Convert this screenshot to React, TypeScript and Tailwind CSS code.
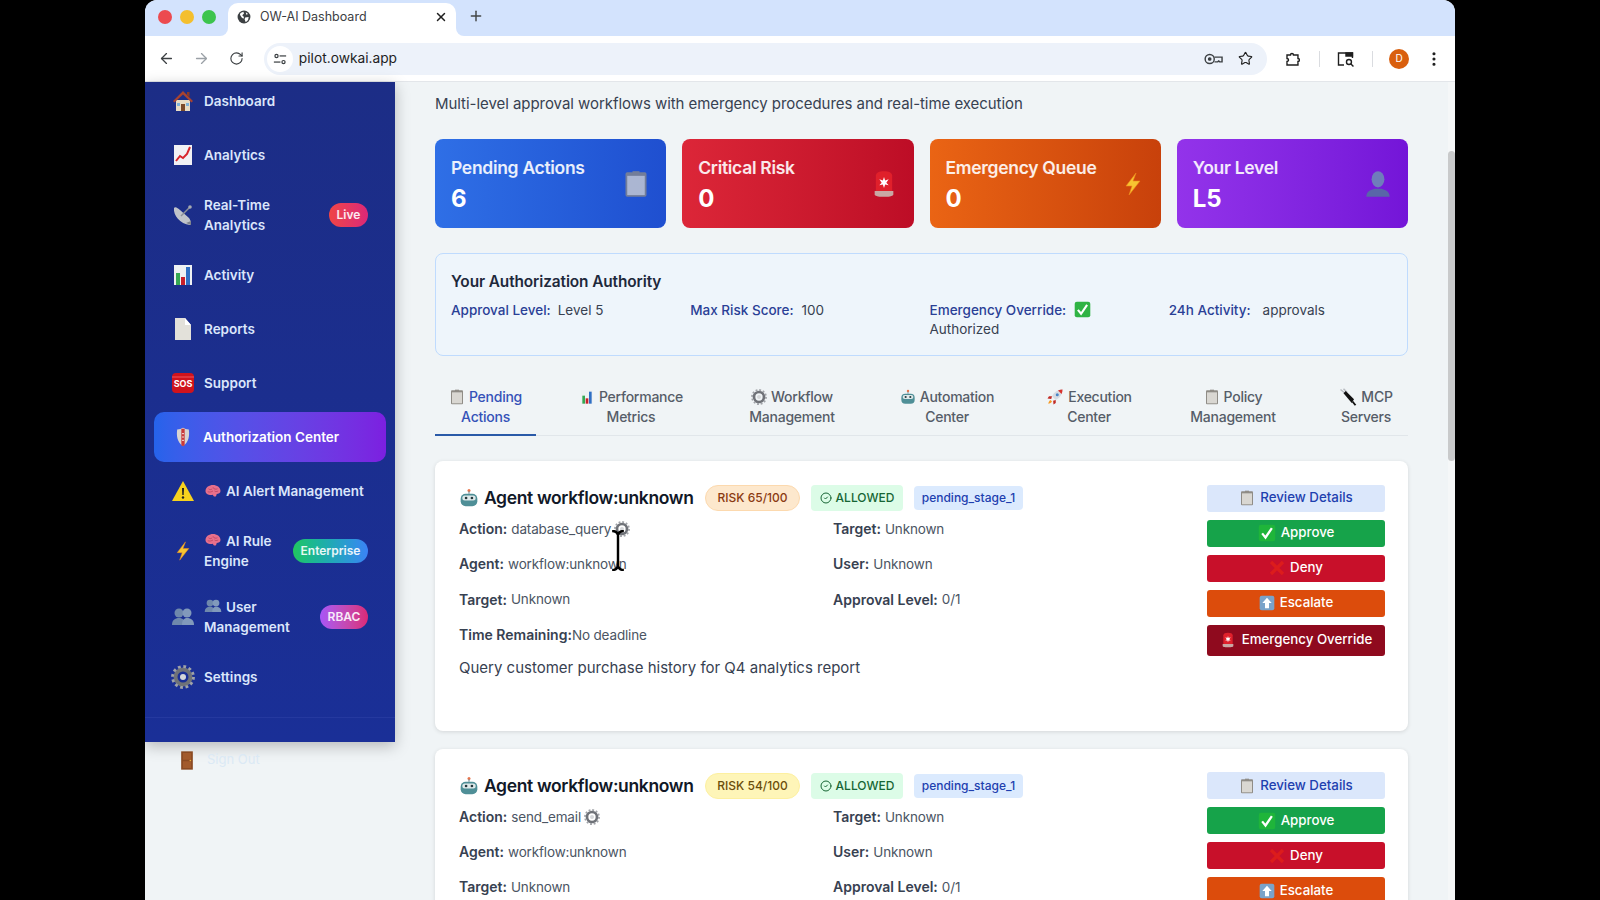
import { ArrowLeft, ArrowRight, CircleCheck, EllipsisVertical, Plus, RotateCw, Star, X } from "lucide-react";
import type { ReactNode } from "react";

// no colour emoji font in the sandbox, so the emoji are small drawings
type IconProps = { className?: string };

const Svg = ({ className = "w-5 h-5", children }: IconProps & { children: ReactNode }) => (
  <svg viewBox="0 0 24 24" className={`shrink-0 ${className}`}>{children}</svg>
);

const House = (p: IconProps) => (
  <Svg {...p}>
    <path d="M5 11h14v11H5z" fill="#e8dcc4" />
    <path d="M12 2 2 12l1.5 1.5L12 5.5l8.500 8L22 12z" fill="#a8432f" />
    <path d="M10 15h4v7h-4z" fill="#7a4a2a" />
    <path d="M6 14h3v3H6zM15 14h3v3h-3z" fill="#7fb2d8" />
    <path d="M16 3h2.500v5L16 6z" fill="#8a3a28" />
  </Svg>
);
const ChartUp = (p: IconProps) => (
  <Svg {...p}>
    <path d="M3 2h18v20H3z" fill="#f1f1f4" />
    <path d="M5 18l4-5 3 2 4-4 3-7" fill="none" stroke="#d8262c" strokeWidth="2" />
  </Svg>
);
const Dish = (p: IconProps) => (
  <Svg {...p}>
    <path d="M3 5c-1 7 6 16 16 17 2-1 1-4-1-7L9 7C7 5 4 3 3 5z" fill="#c0c3ca" />
    <path d="M10 13 19 4" stroke="#8b8f98" strokeWidth="1.500" />
    <circle cx="19" cy="4" r="1.800" fill="#a5a9b1" />
    <path d="M15 20l5 2v-4z" fill="#7e828b" />
  </Svg>
);
const Bars = (p: IconProps) => (
  <Svg {...p}>
    <path d="M3 2h18v20H3z" fill="#eef1f3" />
    <path d="M5 10h4v12H5z" fill="#35a853" />
    <path d="M10 14h4v8h-4z" fill="#c8202a" />
    <path d="M15 4h4v18h-4z" fill="#2f6fc4" />
  </Svg>
);
const Page = (p: IconProps) => (
  <Svg {...p}>
    <path d="M4 1h10l6 7v15H4z" fill="#e3e1da" />
    <path d="M14 1l6 7h-6z" fill="#ffffff" />
  </Svg>
);
const Sos = (p: IconProps) => (
  <Svg {...p}>
    <rect x="1" y="2" width="22" height="20" rx="4" fill="#d0131c" />
    <path d="M1 6h22" stroke="#f2555a" strokeWidth="1" />
    <text x="12" y="16" textAnchor="middle" fontSize="9" fontWeight="700" fill="#fff" fontFamily="Inter, sans-serif">SOS</text>
  </Svg>
);
const Shield = (p: IconProps) => (
  <Svg {...p}>
    <path d="M5 3c3 0 5-1 7-2 2 1 4 2 7 2 1 8 0 15-7 20C5 18 4 11 5 3z" fill="#d9d4d0" />
    <path d="M10 2h4v20l-2 1-2-1z" fill="#c9393a" />
    <path d="M11 8h2M11 12h2M11 16h2" stroke="#fff" strokeWidth="1.200" />
  </Svg>
);
const Warn = (p: IconProps) => (
  <Svg {...p}>
    <path d="M12 2 23 22H1z" fill="#f7d21e" />
    <path d="M11 9h2l-.3 7h-1.400z" fill="#222" />
    <circle cx="12" cy="18.500" r="1.200" fill="#222" />
  </Svg>
);
const Brain = (p: IconProps) => (
  <Svg {...p}>
    <path d="M2 12c0-5 5-8 10-8s10 3 10 8c0 3-3 4-5 4l-1 3c-2 1-4 0-4-2-4 1-10 0-10-5z" fill="#e8708c" />
    <path d="M6 9c2 2 4 1 5 0M12 7c1 3 4 3 6 2M5 13c3 1 5 0 7-1M14 12c1 1 3 1 5 0" fill="none" stroke="#b8405e" strokeWidth="1" />
  </Svg>
);
const Bolt = (p: IconProps) => (
  <Svg {...p}>
    <path d="M15 1 5 14h6l-3 9 11-14h-7z" fill="#f7c531" stroke="#ee8a1c" strokeWidth=".6" />
  </Svg>
);
const People = (p: IconProps) => (
  <Svg {...p}>
    <circle cx="8" cy="8" r="4.500" fill="#6f88ac" />
    <circle cx="16" cy="8" r="4.500" fill="#8199bb" />
    <path d="M1 20c0-5 3-7 7-7s6 2 6 7z" fill="#6f88ac" />
    <path d="M11 20c0-5 2-7 5-7 4 0 7 2 7 7z" fill="#8199bb" />
  </Svg>
);
const Gear = (p: IconProps) => (
  <Svg {...p}>
    <circle cx="12" cy="12" r="7.500" fill="none" stroke="#6f7278" strokeWidth="4" />
    <circle cx="12" cy="12" r="10.500" fill="none" stroke="#a0a3a8" strokeWidth="2.800" strokeDasharray="2.800 2.700" />
    <circle cx="12" cy="12" r="3" fill="#d5d7da" />
  </Svg>
);
const Ledger = (p: IconProps) => (
  <Svg {...p}>
    <rect x="3" y="2" width="18" height="21" rx="1.500" fill="#8f8c86" />
    <rect x="4.500" y="5" width="15" height="16.500" fill="#d9d7d2" />
    <path d="M9 1h6v2.500H9z" fill="#8f8c86" />
  </Svg>
);
const Siren = (p: IconProps) => (
  <Svg {...p}>
    <path d="M5 5c0-3 3-4 7-4s7 1 7 4v14H5z" fill="#e0202b" />
    <path d="M4 18h16v3c0 1-2 2-8 2s-8-1-8-2z" fill="#c9a8a4" />
    <path d="M12 6l1 3 3-1-2 3 2 2-3-.5-1 3-1-3-3 .5 2-2-2-3 3 1z" fill="#fff" />
  </Svg>
);
const Bust = (p: IconProps) => (
  <Svg {...p}>
    <ellipse cx="12" cy="8" rx="5.500" ry="7" fill="#6f88b8" />
    <path d="M2 23c0-5 4-6 7-7h6c3 1 7 2 7 7z" fill="#566fa3" />
  </Svg>
);
const Check = (p: IconProps & { box?: string }) => (
  <Svg className={p.className}>
    <rect x="1" y="1" width="22" height="22" rx="3" fill={p.box ?? "#2fb344"} />
    <path d="M5.500 12.500 10 18 18.500 5.500" fill="none" stroke="#fff" strokeWidth="3" />
  </Svg>
);
const Robot = (p: IconProps) => (
  <Svg {...p}>
    <circle cx="12" cy="3" r="1.800" fill="#e8734a" />
    <path d="M11.300 4h1.400v3h-1.400z" fill="#7f8a90" />
    <rect x="2" y="7" width="20" height="15" rx="6" fill="#4f8f97" />
    <rect x="4" y="9" width="16" height="6" rx="3" fill="#dfe9ea" />
    <circle cx="8.500" cy="12" r="1.600" fill="#26383d" />
    <circle cx="15.500" cy="12" r="1.600" fill="#26383d" />
  </Svg>
);
const Rocket = (p: IconProps) => (
  <Svg {...p}>
    <path d="M22 2c-6 0-11 3-14 9l5 5c6-3 9-8 9-14z" fill="#d7dbe2" />
    <path d="M22 2c-2 0-4 .4-6 1.200L20.800 8C21.600 6 22 4 22 2z" fill="#d8322c" />
    <circle cx="15" cy="9" r="2" fill="#4a86c5" />
    <path d="M8 11H4l-2 3 5 .5zM13 16v4l-3 2-.5-5z" fill="#c22a25" />
    <path d="M6 16c-2 1-3 4-3 5 1 0 4-1 5-3z" fill="#f59a23" />
  </Svg>
);
const Plug = (p: IconProps) => (
  <Svg {...p}>
    <path d="M2 2l6 5M6 1l5 5" stroke="#b9bcc2" strokeWidth="2" />
    <path d="M6 7l3-3 11 11-3 5z" fill="#111" />
    <path d="M18 18l4 5" stroke="#111" strokeWidth="2.500" />
  </Svg>
);
const Door = (p: IconProps) => (
  <Svg {...p}>
    <path d="M5 1h14v22H5z" fill="#8a4a22" />
    <path d="M7 3h10v8H7zM7 13h10v8H7z" fill="#a25a2c" />
    <circle cx="16" cy="12" r="1" fill="#e8b13a" />
  </Svg>
);
const UpBox = (p: IconProps) => (
  <Svg {...p}>
    <rect x="1" y="1" width="22" height="22" rx="3" fill="#7aa3c9" />
    <path d="M12 4l7 8h-4v8H9v-8H5z" fill="#fff" />
  </Svg>
);
const Cross = (p: IconProps) => (
  <Svg {...p}>
    <path d="M3 3l18 18M21 3 3 21" stroke="#dc1c1c" strokeWidth="5" />
  </Svg>
);
const Globe = (p: IconProps) => (
  <Svg {...p}>
    <circle cx="12" cy="12" r="11" fill="#3c4043" />
    <path d="M6 5l5-2 1 3-3 3 3 3-1 3-3-2-3-5zM14 13l6-1-1 5-4 4-2-5zM15 4l4 3-3 1z" fill="#fff" />
  </Svg>
);

type NavItem = { label: ReactNode; icon: ReactNode; badge?: string; badgeClass?: string; tall?: boolean };

const nav: NavItem[] = [
  { label: "Dashboard", icon: <House className="w-6 h-6" /> },
  { label: "Analytics", icon: <ChartUp className="w-6 h-6" /> },
  { label: "Real-Time Analytics", icon: <Dish className="w-6 h-6" />, badge: "Live", badgeClass: "w-[39px] bg-gradient-to-r from-[#ef4444] to-[#db2777]", tall: true },
  { label: "Activity", icon: <Bars className="w-6 h-6" /> },
  { label: "Reports", icon: <Page className="w-6 h-6" /> },
  { label: "Support", icon: <Sos className="w-6 h-6" /> },
];

const navAfter: NavItem[] = [
  { label: <span className="flex items-center gap-1 whitespace-nowrap"><Brain className="w-[18px] h-[18px]" />AI Alert Management</span>, icon: <Warn className="w-6 h-6" /> },
  { label: <span><Brain className="inline w-[18px] h-[18px] mr-1 align-[-3px]" />AI Rule<br />Engine</span>, icon: <Bolt className="w-5 h-5" />, badge: "Enterprise", badgeClass: "w-[75px] bg-gradient-to-r from-[#22c55e] to-[#3b82f6]", tall: true },
  { label: <span><People className="inline w-[18px] h-[18px] mr-1 align-[-3px]" />User<br />Management</span>, icon: <People className="w-6 h-6" />, badge: "RBAC", badgeClass: "w-[48px] bg-gradient-to-r from-[#a855f7] to-[#db2777]", tall: true },
  { label: "Settings", icon: <Gear className="w-6 h-6" /> },
];

function NavRow({ item }: { item: NavItem }) {
  return (
    <div className={`flex items-center mx-[10px] pl-[16px] pr-[17px] gap-[9px] text-[13.500px] font-semibold leading-[20px] text-[#dbe6fb] ${item.tall ? "h-[62px]" : "h-[50px]"}`}>
      <span className="w-6 flex justify-center shrink-0">{item.icon}</span>
      <span className="flex-1 min-w-0">{item.label}</span>
      {item.badge && (
        <span className={`h-[24px] shrink-0 rounded-full flex items-center justify-center text-xs font-semibold text-white/90 ${item.badgeClass}`}>{item.badge}</span>
      )}
    </div>
  );
}

const stats = [
  { title: "Pending Actions", value: "6", icon: <Ledger className="w-7 h-7 opacity-75" />, bg: "from-[#2f6fe6] to-[#1f4fd0]" },
  { title: "Critical Risk", value: "0", icon: <Siren className="w-7 h-7" />, bg: "from-[#dc2638] to-[#bd0d26]" },
  { title: "Emergency Queue", value: "0", icon: <Bolt className="w-6 h-6" />, bg: "from-[#ea6414] to-[#c8410b]" },
  { title: "Your Level", value: "L5", icon: <Bust className="w-7 h-7 opacity-90" />, bg: "from-[#9333ea] to-[#7415d8]" },
];

const tabs = [
  { icon: <Ledger className="w-4 h-4" />, first: "Pending", second: "Actions", active: true },
  { icon: <Bars className="w-4 h-4" />, first: "Performance", second: "Metrics" },
  { icon: <Gear className="w-4 h-4" />, first: "Workflow", second: "Management" },
  { icon: <Robot className="w-4 h-4" />, first: "Automation", second: "Center" },
  { icon: <Rocket className="w-[18px] h-[18px]" />, first: "Execution", second: "Center" },
  { icon: <Ledger className="w-4 h-4" />, first: "Policy", second: "Management" },
  { icon: <Plug className="w-[18px] h-[18px]" />, first: "MCP", second: "Servers" },
];

function Btn({ className, icon, children }: { className: string; icon: ReactNode; children: string }) {
  return (
    <button className={`w-full h-[27px] rounded-[3px] flex items-center justify-center gap-[5px] text-[13.300px] font-medium ${className}`}>
      {icon}
      {children}
    </button>
  );
}

function Field({ label, children }: { label: string; children: ReactNode }) {
  return (
    <div className="h-[20px] flex items-center text-[13.500px] text-[#4b5563] tracking-[-0.15px]">
      <span className="text-sm tracking-normal font-semibold text-[#374151] mr-1">{label}</span>
      {children}
    </div>
  );
}

function ActionCard({ action, risk, riskClass, agent, description }: { action: string; risk: number; riskClass: string; agent: string; description?: string }) {
  return (
    <div className="bg-white rounded-lg shadow-[0_1px_4px_rgba(0,0,0,0.12)] pl-[24px] pr-[23px] pt-[24px] pb-[27px] flex">
      <div className="flex-1 min-w-0 pb-[24px]">
        <div className="flex items-center h-[26px]">
          <Robot className="w-5 h-5 mr-[5px]" />
          <span className="text-[17.500px] font-semibold text-[#111827] tracking-[-0.35px] w-[221px]">Agent workflow:unknown</span>
          <span className={`h-[26px] w-[95px] rounded-full border flex items-center justify-center text-xs font-medium ${riskClass}`}>RISK {risk}/100</span>
          <span className="h-[26px] w-[92px] ml-[11px] rounded-[4px] bg-[#dcfce7] text-[#166534] flex items-center justify-center gap-1 text-xs font-medium">
            <CircleCheck className="w-3 h-3" strokeWidth={2} />ALLOWED
          </span>
          <span className="h-[24px] w-[109px] ml-[11px] rounded-[4px] bg-[#dbeafe] text-[#1e40af] flex items-center justify-center text-xs font-medium">pending_stage_1</span>
        </div>
        <div className="grid grid-cols-[374px_1fr] gap-y-[15.250px] mt-[8px]">
          <Field label="Action:">{action}<Gear className="w-4 h-4 ml-[3px]" /></Field>
          <Field label="Target:">Unknown</Field>
          <Field label="Agent:">{agent}</Field>
          <Field label="User:">Unknown</Field>
          <Field label="Target:">Unknown</Field>
          <Field label="Approval Level:">0/1</Field>
          <div className="col-span-2 h-[20px] flex items-center text-[13.500px] text-[#4b5563] tracking-[-0.15px]">
            <span className="text-sm tracking-normal font-semibold text-[#374151]">Time Remaining:</span>No deadline
          </div>
        </div>
        {description && <p className="mt-[11px] text-[15px] leading-6 text-[#374151]">{description}</p>}
      </div>
      <div className="w-[178px] shrink-0 flex flex-col gap-2 -mt-[0.5px]">
        <Btn className="bg-[#dbe7fb] text-[#1e40af]" icon={<Ledger className="w-4 h-4" />}>Review Details</Btn>
        <Btn className="bg-[#16a34a] text-white" icon={<Check box="#1fb53a" className="w-[18px] h-[18px]" />}>Approve</Btn>
        <Btn className="bg-[#c8102a] text-white" icon={<Cross className="w-4 h-4" />}>Deny</Btn>
        <Btn className="bg-[#dc4c0c] text-white" icon={<UpBox className="w-4 h-4" />}>Escalate</Btn>
        <button className="w-full h-[31px] rounded-[3px] flex items-center justify-center gap-[6px] text-[13.300px] font-medium bg-[#8f0a1e] text-white">
          <Siren className="w-4 h-4" />Emergency Override
        </button>
      </div>
    </div>
  );
}

export default function App() {
  return (
    <div className="w-[1600px] h-[900px] bg-black flex justify-center overflow-hidden font-['Inter',sans-serif]">
      <div className="relative w-[1310px] h-[900px] rounded-t-xl overflow-hidden flex flex-col bg-[#f0f4f6]">
        {/* tab strip */}
        <div className="h-[36px] shrink-0 bg-[#d3e3fd] flex items-end">
          <div className="flex items-center gap-2 ml-[13px] h-[34px] self-start">
            <span className="w-[14px] h-[14px] rounded-full bg-[#ec4a4f]" />
            <span className="w-[14px] h-[14px] rounded-full bg-[#f4bf2e]" />
            <span className="w-[14px] h-[14px] rounded-full bg-[#3cc44d]" />
          </div>
          <div className="relative ml-[12px] w-[228px] h-[33px] bg-white rounded-t-[10px] flex items-center pl-[8px] pr-[8px] pb-[5px]">
            <span className="absolute -left-2 bottom-0 w-2 h-2 bg-white"><span className="block w-2 h-2 bg-[#d3e3fd] rounded-br-lg" /></span>
            <span className="absolute -right-2 bottom-0 w-2 h-2 bg-white"><span className="block w-2 h-2 bg-[#d3e3fd] rounded-bl-lg" /></span>
            <Globe className="w-[14px] h-[14px] ml-[1px]" />
            <span className="ml-[9px] flex-1 text-[12.500px] text-[#3c4043]">OW-AI Dashboard</span>
            <X className="w-[14px] h-[14px] text-[#1f1f1f]" strokeWidth={2.5} />
          </div>
          <Plus className="w-4 h-4 ml-[12px] mb-[12px] text-[#444746]" strokeWidth={2.2} />
        </div>

        {/* toolbar */}
        <div className="h-[46px] shrink-0 bg-white border-b border-[#e3e6ea] flex items-center pl-[13px] pr-[12px]">
          <ArrowLeft className="w-[17px] h-[17px] text-[#3c4043]" strokeWidth={1.8} />
          <ArrowRight className="w-[17px] h-[17px] ml-[18px] text-[#9aa0a6]" strokeWidth={1.8} />
          <RotateCw className="w-[15px] h-[15px] ml-[19px] text-[#3c4043]" strokeWidth={1.8} />
          <div className="ml-[20px] w-[1006px] h-[32px] rounded-full bg-[#edf2fa] flex items-center pl-[1px]">
            <span className="w-[26px] h-[26px] ml-[2px] rounded-full bg-white flex items-center justify-center">
              <svg viewBox="0 0 16 16" className="w-[14px] h-[14px]" fill="none" stroke="#3c4043" strokeWidth="1.400">
                <circle cx="4" cy="4.500" r="1.800" /><path d="M7.500 4.500H15" /><circle cx="12" cy="11.500" r="1.800" /><path d="M1 11.500h7.500" />
              </svg>
            </span>
            <span className="ml-[6px] flex-1 text-[13.750px] text-[#1f1f1f]">pilot.owkai.app</span>
            <svg viewBox="0 0 20 12" className="w-[19px] h-[12px]" fill="none" stroke="#3c4043" strokeWidth="1.500">
              <circle cx="6" cy="6" r="4.800" /><circle cx="6" cy="6" r="1.200" fill="#3c4043" /><path d="M11 4h8v5h-2.500l-1-1-1 1H11" />
            </svg>
            <Star className="w-[15px] h-[15px] ml-[15px] mr-[14px] text-[#1f1f1f]" strokeWidth={1.8} />
          </div>
          <svg viewBox="0 0 16 16" className="w-4 h-4 ml-[18px]" fill="none" stroke="#1f1f1f" strokeWidth="1.400">
            <path d="M2 4h3.500a1.500 1.500 0 0 1 3 0H13v3.500a1.500 1.500 0 0 1 0 3V14H2v-3.500a1.500 1.500 0 0 0 0-3z" />
          </svg>
          <span className="w-px h-[16px] bg-[#dadce0] ml-[18px]" />
          <svg viewBox="0 0 18 16" className="w-[18px] h-4 ml-[17px]" fill="none" stroke="#1f1f1f" strokeWidth="1.400">
            <path d="M7 14H1.500V2h14v5" /><path d="M9 2h6.500v3H9z" fill="#1f1f1f" /><circle cx="12" cy="11" r="2.500" /><path d="M14 13l2.500 2.500" />
          </svg>
          <span className="w-px h-[16px] bg-[#dadce0] ml-[17px]" />
          <span className="w-[20px] h-[20px] ml-[16px] rounded-full bg-[#d95f0e] text-white text-[10px] flex items-center justify-center">D</span>
          <EllipsisVertical className="w-[18px] h-[18px] ml-[16px] text-[#1f1f1f]" strokeWidth={2.2} />
        </div>

        <div className="flex-1 min-h-0 flex">
          {/* left column */}
          <div className="w-[250px] shrink-0">
            <aside className="h-[660px] bg-gradient-to-b from-[#1c2d86] to-[#1a2f97] shadow-[0_4px_14px_rgba(0,0,0,0.25)] flex flex-col overflow-hidden">
              <div className="-mt-[6px] flex flex-col gap-1">
                {nav.map((item, i) => <NavRow key={i} item={item} />)}
                <div className="mx-[9px] h-[50px] pl-[17px] flex items-center gap-[8px] rounded-[10px] bg-gradient-to-r from-[#2563eb] to-[#7c1fe0] text-[13.500px] font-semibold text-white">
                  <span className="w-6 flex justify-center shrink-0"><Shield className="w-5 h-6" /></span>
                  Authorization Center
                </div>
                {navAfter.map((item, i) => <NavRow key={i} item={item} />)}
              </div>
              <div className="mt-auto h-[25px] border-t border-[#25399f]" />
            </aside>
            <div className="flex items-center h-[36px] pl-[32px] gap-[10px] text-[13px] text-[#dbe9f5]">
              <Door className="w-5 h-[21px]" />
              Sign Out
            </div>
          </div>

          {/* main column */}
          <div className="relative flex-1 min-w-0 overflow-hidden pl-[40px] pr-[47px] pt-[10px]">
            <p className="text-[15px] leading-6 text-[#374151] tracking-[-0.05px]">Multi-level approval workflows with emergency procedures and real-time execution</p>

            <div className="grid grid-cols-4 gap-4 mt-[23px]">
              {stats.map((s) => (
                <div key={s.title} className={`h-[89px] rounded-lg bg-gradient-to-r ${s.bg} px-4 flex items-center justify-between text-white`}>
                  <div className="pt-[2px]">
                    <div className="text-[17.500px] leading-6 font-semibold tracking-[-0.3px] text-white/90">{s.title}</div>
                    <div className="mt-[4px] text-2xl leading-[30px] font-bold">{s.value}</div>
                  </div>
                  {s.icon}
                </div>
              ))}
            </div>

            <div className="mt-[25px] h-[103px] rounded-lg border border-[#bfdbfe] bg-[#eef5fb] px-[15px] pt-[16px]">
              <h3 className="text-[15.400px] leading-6 font-semibold text-[#1e293b] tracking-[-0.1px]">Your Authorization Authority</h3>
              <div className="grid grid-cols-4 gap-4 mt-[7px] text-[13.500px] leading-[19px] text-[#374151]">
                <div><span className="font-medium text-[#2a3f96] mr-[7px]">Approval Level:</span>Level 5</div>
                <div><span className="font-medium text-[#2a3f96] mr-2">Max Risk Score:</span>100</div>
                <div>
                  <span className="font-medium text-[#2a3f96] mr-2">Emergency Override:</span>
                  <Check className="inline w-[17px] h-[17px] align-[-3px]" />
                  <br />Authorized
                </div>
                <div><span className="font-medium text-[#2a3f96] mr-3">24h Activity:</span>approvals</div>
              </div>
            </div>

            <div className="mt-[21px] h-[59px] grid grid-cols-[101px_190px_132px_178px_106px_182px_84px] border-b border-[#e1e6ea]">
              {tabs.map((t) => (
                <div key={t.first + t.second} className={`h-[59px] pt-[10px] text-center text-sm leading-[19.500px] tracking-[-0.25px] font-medium ${t.active ? "border-b-2 border-[#2a5aa8] text-[#3552b8]" : "text-[#565d68]"}`}>
                  <div className="flex items-center justify-center gap-1">{t.icon}{t.first}</div>
                  <div>{t.second}</div>
                </div>
              ))}
            </div>

            <div className="mt-[25px] flex flex-col gap-[18px]">
              <ActionCard action="database_query" risk={65} riskClass="bg-[#fde8cd] border-[#fcd9ae] text-[#8a3a12]" agent="workflow:unknown" description="Query customer purchase history for Q4 analytics report" />
              <ActionCard action="send_email" risk={54} riskClass="bg-[#fef5b8] border-[#fdf0a0] text-[#6b4e0a]" agent="workflow:unknown" />
            </div>

            {/* scrollbar */}
            <div className="absolute right-0 top-0 bottom-0 w-[7px] bg-[#f5f7f8]">
              <div className="mt-[69px] h-[310px] rounded-full bg-[#c9cacb]" />
            </div>
          </div>
        </div>

        {/* mouse cursor, I-beam over the first card */}
        <svg viewBox="0 0 14 42" className="absolute left-[466px] top-[530px] w-[14px] h-[41px]" fill="none" stroke="#000" strokeWidth="2.500">
          <path d="M1 1c3 0 5 1 6 4 1-3 3-4 6-4M7 5v32M1 41c3 0 5-1 6-4 1 3 3 4 6 4" />
        </svg>
      </div>
    </div>
  );
}
